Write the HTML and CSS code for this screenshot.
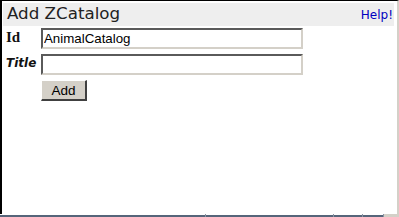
FILE: index.html
```html
<!DOCTYPE html>
<html>
<head>
	<title>Add ZCatalog</title>
	<link rel="stylesheet" href="styles.css">
</head>
<body>
	<div class="frame">
		<div class="form-title">
			<h2>Add ZCatalog</h2>
			<a class="help" href="#">Help!</a>
		</div>
		<form class="form">
			<div class="form-label">Id</div>
			<input class="field" type="text" value="AnimalCatalog">
			<div class="form-optional">Title</div>
			<input class="field" type="text" value="">
			<div></div>
			<div><button class="btn" type="button">Add</button></div>
		</form>
	</div>
	<div class="status">
		<div class="seg" style="width: 205px"></div>
		<div class="tick"></div>
		<div class="seg" style="width: 127px"></div>
		<div class="tick"></div>
		<div class="seg" style="width: 28px"></div>
		<div class="tick"></div>
		<div class="seg" style="width: 20px"></div>
		<div class="tick"></div>
		<div class="seg last"></div>
	</div>
</body>
</html>
```

FILE: styles.css
```css
* {
	margin: 0;
	padding: 0;
	box-sizing: border-box;
}

html, body {
	width: 399px;
	height: 217px;
	background-color: #fff;
	overflow: hidden;
}

.frame {
	height: 214px;
	border-top: 1px solid #000;
	border-left: 2px solid #000;
	border-right: 2px solid #d4d0c8;
	padding: 2px 3px 0 1px;
}

.form-title {
	display: flex;
	justify-content: space-between;
	align-items: baseline;
	height: 23px;
	background-color: #eee;
	padding: 0 1px 0 4px;
}

.form-title h2 {
	font-family: "DejaVu Sans", sans-serif;
	font-size: 16.7px;
	font-weight: normal;
	color: #222;
	line-height: 21px;
}

.help {
	font-family: "DejaVu Sans", sans-serif;
	font-size: 12px;
	color: #0000c0;
	text-decoration: none;
}

.form {
	display: grid;
	grid-template-columns: 35px 262px;
	row-gap: 5px;
	margin-top: 2px;
	padding-left: 3px;
}

.form-label {
	font-family: "Liberation Serif", serif;
	font-weight: bold;
	font-size: 15px;
	line-height: 21px;
	margin-top: -1px;
	color: #111;
}

.form-optional {
	font-family: "DejaVu Sans", sans-serif;
	font-weight: bold;
	font-style: italic;
	font-size: 12px;
	line-height: 21px;
	margin-top: -1px;
	color: #111;
}

.field {
	height: 21px;
	width: 262px;
	border-width: 2px;
	border-style: solid;
	border-color: #5a5a5a #d4d0c8 #d4d0c8 #5a5a5a;
	padding: 0 1px;
	font-family: "Liberation Sans", sans-serif;
	font-size: 13.3px;
	color: #000;
	background: #fff;
	outline: none;
}

.btn {
	width: 46px;
	height: 21px;
	background-color: #d4d0c8;
	border-width: 1px 2px 2px 1px;
	border-style: solid;
	border-color: #fff #404040 #404040 #fff;
	font-family: "Liberation Sans", sans-serif;
	font-size: 13.5px;
	color: #000;
	padding-top: 1px;
}

.status {
	display: flex;
	align-items: flex-end;
	height: 3px;
}

.seg {
	height: 2px;
	background-color: #56657a;
}

.tick {
	width: 1px;
	height: 3px;
	background-color: #8a94a3;
}

.seg.last {
	flex: 1;
	height: 3px;
	background-color: #d4d0c8;
}
```
